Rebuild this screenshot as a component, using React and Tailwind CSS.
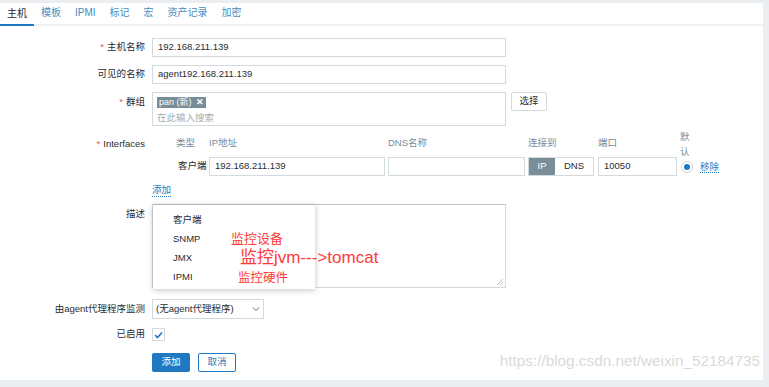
const font = { fontFamily: '"Liberation Sans", "Noto Sans CJK SC", sans-serif' };

function Label({ children, req }) {
  return (
    <div className="w-[145px] shrink-0 text-right text-[#1f2c33] pr-0">
      {req && <span className="text-[#e45959] mr-[3px]">*</span>}
      {children}
    </div>
  );
}

function Input({ value, className = "" }) {
  return (
    <div className={`h-[19px] border border-[#d3dade] bg-white flex items-center px-[5px] text-[#1f2c33] ${className}`}>
      {value}
    </div>
  );
}

export default function App() {
  const tabs = ["主机", "模板", "IPMI", "标记", "宏", "资产记录", "加密"];
  return (
    <div className="w-[769px] h-[387px] bg-[#ebeef0] pt-[3px] overflow-hidden text-[9.5px]" style={font}>
      <div className="w-[763px] h-[377px] bg-white relative">
        {/* tabs */}
        <div className="h-[23px] flex items-end border-b-2 border-[#eef0f2] text-[10px]">
          {tabs.map((t, i) => (
            <div
              key={t}
              className={`h-[23px] flex items-center whitespace-nowrap ${i === 0 ? "px-[7px] text-[#1f2c33] border-b-2 border-[#1f78c1] -mb-[2px]" : "px-[7px] text-[#4a8bc2]"}`}
            >
              {t}
            </div>
          ))}
        </div>

        <div className="flex flex-col pt-[12px]">
          <div className="flex items-center gap-[7px] h-[19px]">
            <Label req>主机名称</Label>
            <Input value="192.168.211.139" className="w-[354px]" />
          </div>
          <div className="flex items-center gap-[7px] h-[19px] mt-[8px]">
            <Label>可见的名称</Label>
            <Input value="agent192.168.211.139" className="w-[354px]" />
          </div>
          <div className="flex items-start gap-[7px] mt-[8px]">
            <Label req>
              <span className="leading-[19px]">群组</span>
            </Label>
            <div className="w-[354px] h-[34px] border border-[#d3dade] px-[4px] pt-[2px]">
              <div className="inline-flex items-center h-[11px] bg-[#768d99] text-white px-[2px] gap-[4px] text-[9px]">
                pan (新) <span className="font-bold text-[9px]">✕</span>
              </div>
              <div className="text-[#a3afb5] mt-[3px] leading-[12px]">在此输入搜索</div>
            </div>
            <div className="h-[19px] w-[36px] border border-[#d3dade] rounded-[2px] flex items-center justify-center text-[#1f2c33] ml-[-2px]">
              选择
            </div>
          </div>

          {/* interfaces */}
          <div className="flex gap-[7px] mt-[8px]">
            <Label req>
              <span className="leading-[19px]">Interfaces</span>
            </Label>
            <div className="flex flex-col">
              <div className="flex items-center text-[#768d99] h-[19px]">
                <div className="w-[57px] pl-[24px]">类型</div>
                <div className="w-[179px]">IP地址</div>
                <div className="w-[140px]">DNS名称</div>
                <div className="w-[70px]">连接到</div>
                <div className="w-[82px]">端口</div>
                <div className="w-[12px] leading-[15px]">默认</div>
              </div>
              <div className="flex items-center h-[19px] mt-[4px]">
                <div className="w-[57px] pl-[26px] text-[#1f2c33]">客户端</div>
                <Input value="192.168.211.139" className="w-[176px] mr-[3px]" />
                <Input value="" className="w-[137px] mr-[3px]" />
                <div className="flex h-[19px] w-[66px] mr-[4px] border border-[#d3dade]">
                  <div className="w-[26px] bg-[#7a8e99] text-white flex items-center justify-center">IP</div>
                  <div className="flex-1 flex items-center justify-center text-[#1f2c33]">DNS</div>
                </div>
                <Input value="10050" className="w-[79px] mr-[4px]" />
                <div className="w-[12px] h-[12px] rounded-full border border-[#c9d2d7] flex items-center justify-center">
                  <div className="w-[6px] h-[6px] rounded-full bg-[#1f78c1]" />
                </div>
                <div className="ml-[7px] text-[#1f78c1] border-b border-dotted border-[#1f78c1] leading-[11px]">移除</div>
              </div>
            </div>
          </div>
          <div className="flex gap-[7px] mt-[8px]">
            <div className="w-[145px]" />
            <div className="text-[#1f78c1] border-b border-dotted border-[#1f78c1] leading-[12px]">添加</div>
          </div>

          {/* description */}
          <div className="flex gap-[7px] mt-[7px]">
            <Label>
              <span className="leading-[19px]">描述</span>
            </Label>
            <div className="relative w-[354px] h-[84px] border border-[#d3dade] border-t-[#b8c4ca]">
              <svg className="absolute right-[2px] bottom-[2px]" width="6" height="6" viewBox="0 0 6 6">
                <path d="M6 0 L0 6 M6 3 L3 6" stroke="#aab" strokeWidth="0.8" />
              </svg>
              <div className="absolute left-0 top-0 w-[162px] h-[84px] bg-white shadow-[0_1px_6px_rgba(0,0,0,0.25)] text-[#1f2c33] pl-[20px] pt-[8px]">
                <div className="h-[19px]">客户端</div>
                <div className="h-[19px]">SNMP</div>
                <div className="h-[19px]">JMX</div>
                <div className="h-[19px]">IPMI</div>
              </div>
              <div className="absolute left-[78px] top-[24px] text-[#ff3a3a] text-[13px]">监控设备</div>
              <div className="absolute left-[87px] top-[40px] text-[#ff3a3a] text-[17px]">监控jvm---&gt;tomcat</div>
              <div className="absolute left-[85px] top-[64px] text-[#ff3a3a] text-[12.5px]">监控硬件</div>
            </div>
          </div>

          <div className="flex items-center gap-[7px] mt-[11px] h-[20px]">
            <Label>由agent代理程序监测</Label>
            <div className="w-[112px] h-[20px] border border-[#d3dade] flex items-center justify-between px-[3px] text-[#1f2c33]">
              <span>(无agent代理程序)</span>
              <svg width="8" height="6" viewBox="0 0 8 6">
                <path d="M1 1.5 L4 4.5 L7 1.5" stroke="#666" strokeWidth="1" fill="none" />
              </svg>
            </div>
          </div>
          <div className="flex items-center gap-[7px] mt-[9px] h-[13px]">
            <Label>已启用</Label>
            <div className="w-[13px] h-[13px] border border-[#d3dade] flex items-center justify-center">
              <svg width="9" height="8" viewBox="0 0 9 8">
                <path d="M1 4 L3.5 6.5 L8 1.5" stroke="#1f78c1" strokeWidth="1.6" fill="none" />
              </svg>
            </div>
          </div>
          <div className="flex items-center gap-[7px] mt-[12px]">
            <div className="w-[145px]" />
            <div className="w-[38px] h-[19px] bg-[#1f78c1] rounded-[2px] text-white flex items-center justify-center">添加</div>
            <div className="w-[38px] h-[19px] ml-[1px] border border-[#1f78c1] rounded-[2px] text-[#1f78c1] flex items-center justify-center">取消</div>
          </div>
        </div>

        <div className="absolute right-[3px] bottom-[7px] text-[15.3px] text-[#dadada]">
          https://blog.csdn.net/weixin_52184735
        </div>
      </div>
    </div>
  );
}
